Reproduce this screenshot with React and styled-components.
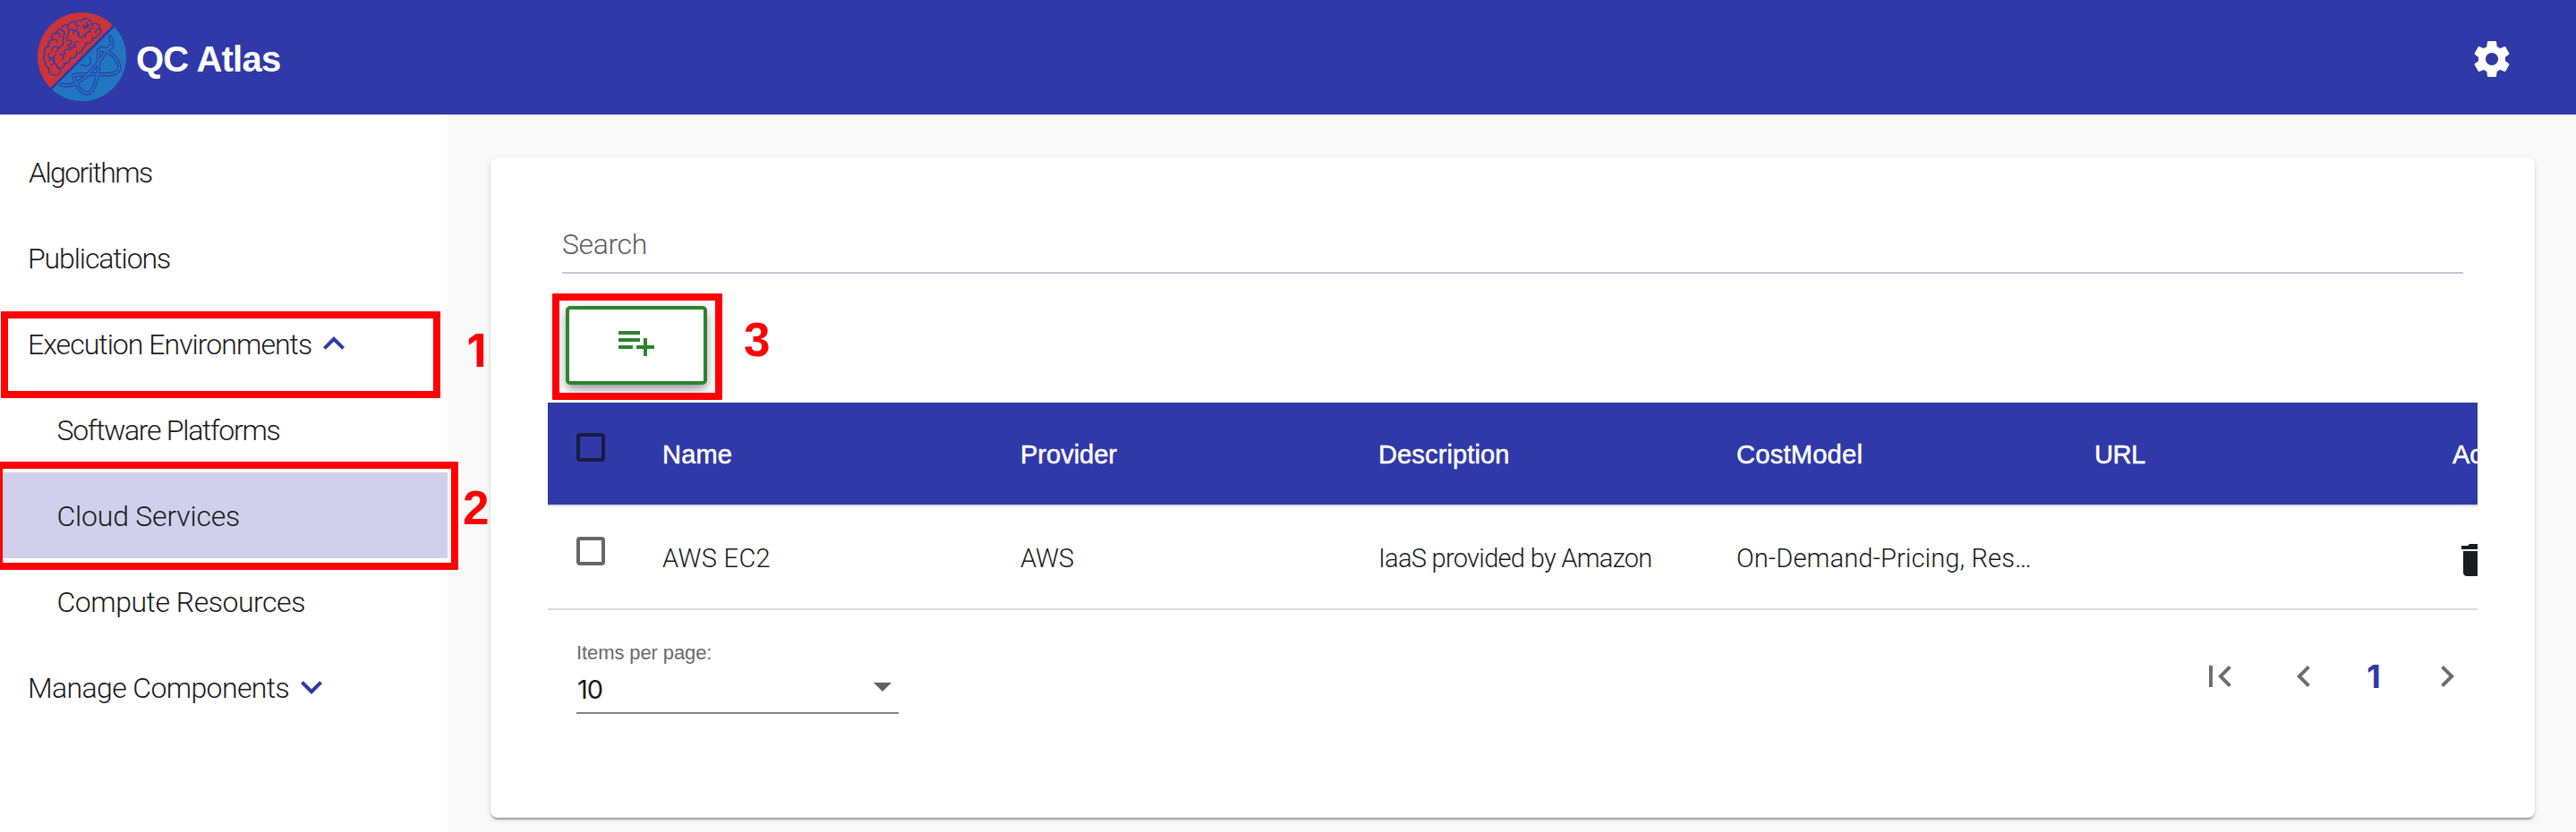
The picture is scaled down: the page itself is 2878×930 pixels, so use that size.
import React from 'react';
import styled, { createGlobalStyle } from 'styled-components';

const indigo = '#3039a8';
const light = 'Roboto, "Liberation Sans", sans-serif';
const sans = '"Liberation Sans", Arial, sans-serif';
const digits = 'Inter, "Liberation Sans", sans-serif';

const GlobalStyle = createGlobalStyle`
  *, *::before, *::after { box-sizing: border-box; }
  body { margin: 0; background: #f9f9f9; font-family: ${sans}; overflow: hidden; }
  button { font: inherit; padding: 0; border: 0; background: none; }
  svg { display: block; flex: none; }
`;

const Page = styled.div`
  position: relative;
  width: 2878px;
  height: 930px;
  display: flex;
  flex-direction: column;
  overflow: hidden;
`;

const Header = styled.header`
  height: 128px;
  flex: none;
  display: flex;
  align-items: center;
  padding: 0 70px 0 42px;
  background: ${indigo};
  color: #fff;
`;

const Brand = styled.div`
  flex: 1;
  display: flex;
  align-items: center;
  gap: 11px;
`;

const BrandName = styled.h1`
  margin: 4px 0 0;
  font: bold 40px/46px ${sans};
  letter-spacing: -0.75px;
`;

const Gear = styled.button`
  display: flex;
  margin-top: 4px;
  color: #fff;
`;

const Body = styled.div`
  flex: 1;
  display: flex;
  min-height: 0;
`;

const Sidebar = styled.nav`
  width: 500px;
  flex: none;
  padding-top: 16px;
  background: #fff;
`;

const NavItem = styled.a`
  height: 96px;
  display: flex;
  align-items: center;
  gap: 1px;
  padding-left: ${p => (p.$nested ? 63.5 : p.$flush ? 32 : 31)}px;
  background: ${p => (p.$active ? '#d0d0ec' : 'transparent')};
  color: ${indigo};
`;

const NavLabel = styled.span`
  padding-top: 2px;
  font: 300 32px/38px ${light};
  letter-spacing: ${p => p.$track}px;
  color: #1a1a1a;
  white-space: nowrap;
`;

const Main = styled.main`
  flex: 1;
  min-width: 0;
  padding: 48px 46px 16px 48px;
  background: #f9f9f9;
`;

const Card = styled.section`
  height: 738px;
  display: flex;
  flex-direction: column;
  padding: 74px 64px 0;
  border-radius: 8px;
  background: #fff;
  box-shadow: 0 4px 2px -2px rgba(0, 0, 0, 0.2), 0 2px 2px rgba(0, 0, 0, 0.14),
    0 2px 6px rgba(0, 0, 0, 0.12);
`;

const SearchField = styled.div`
  height: 56px;
  flex: none;
  margin: 0 16px;
  padding-top: 4px;
  border-bottom: 2px solid #c3c8d3;
  font: 300 32px/38px ${light};
  letter-spacing: -0.39px;
  color: #5e5e5e;
`;

const AddButton = styled.button`
  width: 158px;
  height: 88px;
  flex: none;
  margin: 36px 0 20px 20px;
  display: flex;
  justify-content: center;
  padding-top: 12px;
  border: 4px solid #2e832e;
  border-radius: 5px;
  background: #fff;
  color: #2e832e;
  box-shadow: 0 6px 10px -2px rgba(0, 0, 0, 0.3), 0 4px 16px rgba(0, 0, 0, 0.2);
`;

const Table = styled.div`
  flex: none;
  overflow: hidden;
`;

const TableRow = styled.div`
  height: 116px;
  width: 2528px;
  display: grid;
  grid-template-columns: 128px repeat(6, 400px);
  align-items: center;
  border-bottom: 2px solid #d9dbe0;
  background: ${p => (p.$head ? indigo : '#fff')};
`;

const Checkbox = styled.span`
  width: 32px;
  height: 32px;
  margin: 0 0 14px 32px;
  border: 4px solid ${p => (p.$dark ? '#181b42' : '#666')};
  border-radius: 4px;
`;

const HeadCell = styled.div`
  padding-top: 2px;
  font: 29px/34px ${sans};
  letter-spacing: ${p => p.$track || 0}px;
  -webkit-text-stroke: 0.5px #fff;
  color: #fff;
  white-space: nowrap;
`;

const Cell = styled.div`
  padding-top: ${p => (p.$icon ? 6 : 1)}px;
  font: 300 29px/34px ${light};
  letter-spacing: ${p => p.$track || 0}px;
  color: #191c20;
  white-space: nowrap;
`;

const Pager = styled.footer`
  display: flex;
  justify-content: space-between;
  padding: 32px 10px 0 32px;
`;

const PageSize = styled.div`
  width: 360px;
  height: 84px;
  border-bottom: 2px solid #858585;
`;

const PageSizeLabel = styled.div`
  padding-top: 3px;
  font: 22px/26px ${sans};
  letter-spacing: -0.1px;
  color: #6b6b6b;
`;

const PageSizeValue = styled.div`
  display: flex;
  align-items: center;
  justify-content: space-between;
  padding: 8px 8px 0 1px;
  font: 29px/34px ${digits};
  letter-spacing: -1px;
  color: #1a1a1a;
`;

const PageSizeNumber = styled.span`
  margin: 3px 0 -3px;
`;

const PageNav = styled.div`
  display: flex;
  align-items: center;
  height: 48px;
  margin-top: 18px;
  color: #6e6e6e;
`;

const PageButton = styled.button`
  display: flex;
  margin-right: ${p => p.$after || 0}px;
  color: inherit;
`;

const CurrentPage = styled.span`
  width: 112px;
  padding: 0 4px 1px 0;
  text-align: center;
  font: bold 36px/46px ${digits};
  color: ${indigo};
`;

const Outline = styled.div`
  position: absolute;
  left: ${p => p.$x}px;
  top: ${p => p.$y}px;
  width: ${p => p.$w}px;
  height: ${p => p.$h}px;
  border: 8px solid #ff0004;
  border-radius: 1px;
`;

const Step = styled.span`
  position: absolute;
  left: ${p => p.$x}px;
  top: ${p => p.$y}px;
  font: bold 53px/60px ${sans};
  font-family: ${p => (p.$plain ? digits : sans)};
  font-size: ${p => (p.$plain ? 51 : 53)}px;
  color: #ff0004;
`;

const Icon = ({ d, size = 48 }) => (
  <svg width={size} height={size} viewBox="0 0 24 24" fill="currentColor">
    <path d={d} />
  </svg>
);

const icons = {
  settings:
    'M19.43 12.98c.04-.32.07-.64.07-.98s-.03-.66-.07-.98l2.11-1.65c.19-.15.24-.42.12-.64l-2-3.46c-.12-.22-.39-.3-.61-.22l-2.49 1c-.52-.4-1.08-.73-1.69-.98l-.38-2.65C14.46 2.18 14.25 2 14 2h-4c-.25 0-.46.18-.49.42l-.38 2.65c-.61.25-1.17.59-1.69.98l-2.49-1c-.23-.09-.49 0-.61.22l-2 3.46c-.13.22-.07.49.12.64l2.11 1.65c-.04.32-.07.65-.07.98s.03.66.07.98l-2.11 1.65c-.19.15-.24.42-.12.64l2 3.46c.12.22.39.3.61.22l2.49-1c.52.4 1.08.73 1.69.98l.38 2.65c.03.24.24.42.49.42h4c.25 0 .46-.18.49-.42l.38-2.65c.61-.25 1.17-.59 1.69-.98l2.49 1c.23.09.49 0 .61-.22l2-3.46c.12-.22.07-.49-.12-.64l-2.11-1.65zM12 15.5c-1.93 0-3.5-1.57-3.5-3.5s1.57-3.5 3.5-3.5 3.5 1.57 3.5 3.5-1.57 3.5-3.5 3.5z',
  less: 'M12 8l-6 6 1.41 1.41L12 10.83l4.59 4.58L18 14z',
  more: 'M16.59 8.59L12 13.17 7.41 8.59 6 10l6 6 6-6z',
  add: 'M14 10H2v2h12v-2zm0-4H2v2h12V6zm4 8v-4h-2v4h-4v2h4v4h2v-4h4v-2h-4zM2 16h8v-2H2v2z',
  trash: 'M6 19c0 1.1.9 2 2 2h8c1.1 0 2-.9 2-2V7H6v12zM19 4h-3.5l-1-1h-5l-1 1H5v2h14V4z',
  first: 'M18.41 16.59L13.82 12l4.59-4.59L17 6l-6 6 6 6zM6 6h2v12H6z',
  prev: 'M15.41 7.41L14 6l-6 6 6 6 1.41-1.41L10.83 12z',
  next: 'M10 6L8.59 7.41 13.17 12l-4.58 4.59L10 18l6-6z',
};

const LogoMark = styled.svg`
  margin-top: -1px;
`;

const Logo = () => (
  <LogoMark width="99" height="99" viewBox="36 42 297 297" fill="none" strokeLinecap="round" strokeLinejoin="round">
    <clipPath id="globe">
      <circle cx="184.500" cy="190.500" r="148.500" />
    </clipPath>
    <g clipPath="url(#globe)">
      <path d="M30 30H341L79 295L30 345Z" fill="#cb3439" />
      <path d="M341 44V345H41L86 299Z" fill="#2077c0" />
    </g>
    <g stroke={indigo} strokeWidth="4">
      <path d="M88 250a13 13 0 0 1-12-20a16 16 0 0 1-13-21a17 17 0 0 1-1-27a16 16 0 0 1 12-26a14 14 0 0 1 12-22a13 13 0 0 1 12-22a14 14 0 0 1 17-14a17 17 0 0 1 25-13a16 16 0 0 1 24-11a14 14 0 0 1 19-3a15 15 0 0 1 27-2a14 14 0 0 1 8 15a14 14 0 0 1 25 8a14 14 0 0 1-5 25a14 14 0 0 1-18 9a15 15 0 0 1-22 17a14 14 0 0 1-11 18a14 14 0 0 1-21 14a15 15 0 0 1-21 18a15 15 0 0 1-20 18a14 14 0 0 1-20 16a13 13 0 0 1-17 23z" />
      <path d="M85 135c10-7 17-2 18 7M97 112c12-4 16 5 13 12M115 102c12 0 14 8 8 16M139 88c-6 12 4 16 13 10M152 97c4 12 14 8 16-2M164 73c-8 10 2 16 13 12M190 84c10 12 16-4 11-7M207 82c0 12-14 15-22 8M243 99c-9-2-15 3-12 11M222 94c-12-3-15 8-8 14M211 107c-14-2-18 10-14 17M193 118c-10 15-24 4-22-8M155 112c6-13 22-8 19 2M145 103c-14 12-2 24-15 26M125 118c-12 14 4 22-5 34M135 136c16-8 21 10 7 15M173 140c-18-2-20 13-7 17M160 151c-7 19-23 9-21-2M146 169c-14-9-29 2-17 14M118 153c-18 2-7 18-22 22M105 162c-13-12-25-1-19 11M75 178c-8 13 4 21 13 14M96 185c-14 9 4 16-6 27M110 182c17-1 15 13 7 19M74 205c4-11 14-7 17 2M81 219c12-12 22-4 21 9" />
    </g>
    <g stroke={indigo} strokeWidth="13">
      <path d="M279 124C296 154 279 176 250 160M240 167C247 245 226 315 202 313C179 311 164 284 156 252M245 166C288 170 322 218 305 239C288 261 200 241 157 253M280 154C252 191 203 270 151 284C138 288 127 287 116 284" />
    </g>
    <g stroke="#2077c0" strokeWidth="6">
      <path d="M279 124C296 154 279 176 250 160M240 167C247 245 226 315 202 313C179 311 164 284 156 252M245 166C288 170 322 218 305 239C288 261 200 241 157 253M280 154C252 191 203 270 151 284C138 288 127 287 116 284" />
    </g>
    <path d="M210 190C219 207 211 222 197 221C190 221 185 219 182 216" stroke={indigo} strokeWidth="4" />
  </LogoMark>
);

const nav = [
  { label: 'Algorithms', track: -1.57, flush: true },
  { label: 'Publications', track: -1.1 },
  { label: 'Execution Environments', track: -0.96, icon: 'less' },
  { label: 'Software Platforms', track: -1.29, nested: true },
  { label: 'Cloud Services', track: -0.21, nested: true, active: true },
  { label: 'Compute Resources', track: -0.47, nested: true },
  { label: 'Manage Components', track: -0.63, icon: 'more' },
];

const columns = [
  ['Name', 0.2],
  ['Provider', 0],
  ['Description', 0.14],
  ['CostModel', 0.28],
  ['URL', -0.49],
  ['Actions', 0],
];

const service = [
  ['AWS EC2', 0.3],
  ['AWS', -0.2],
  ['IaaS provided by Amazon', -0.7],
  ['On-Demand-Pricing, Res…', 0.14],
  ['', 0],
];

export default function App() {
  return (
    <Page>
      <GlobalStyle />
      <Header>
        <Brand>
          <Logo />
          <BrandName>QC Atlas</BrandName>
        </Brand>
        <Gear aria-label="Settings">
          <Icon d={icons.settings} />
        </Gear>
      </Header>
      <Body>
        <Sidebar>
          {nav.map(item => (
            <NavItem key={item.label} $nested={item.nested} $active={item.active} $flush={item.flush}>
              <NavLabel $track={item.track}>{item.label}</NavLabel>
              {item.icon && <Icon d={icons[item.icon]} />}
            </NavItem>
          ))}
        </Sidebar>
        <Main>
          <Card>
            <SearchField>Search</SearchField>
            <AddButton aria-label="Add">
              <Icon d={icons.add} />
            </AddButton>
            <Table>
              <TableRow $head>
                <Checkbox $dark />
                {columns.map(([name, track]) => (
                  <HeadCell key={name} $track={track}>{name}</HeadCell>
                ))}
              </TableRow>
              <TableRow>
                <Checkbox />
                {service.map(([text, track], i) => (
                  <Cell key={i} $track={track}>{text}</Cell>
                ))}
                <Cell $icon>
                  <Icon d={icons.trash} />
                </Cell>
              </TableRow>
            </Table>
            <Pager>
              <PageSize>
                <PageSizeLabel>Items per page:</PageSizeLabel>
                <PageSizeValue>
                  <PageSizeNumber>10</PageSizeNumber>
                  <svg width="20" height="10" viewBox="0 0 20 10" fill="#616161">
                    <path d="M0 0h20L10 10z" />
                  </svg>
                </PageSizeValue>
              </PageSize>
              <PageNav>
                <PageButton $after={46} aria-label="First page">
                  <Icon d={icons.first} />
                </PageButton>
                <PageButton aria-label="Previous page">
                  <Icon d={icons.prev} />
                </PageButton>
                <CurrentPage>1</CurrentPage>
                <PageButton aria-label="Next page">
                  <Icon d={icons.next} />
                </PageButton>
              </PageNav>
            </Pager>
          </Card>
        </Main>
      </Body>
      <Outline $x={1} $y={348} $w={491} $h={97} />
      <Outline $x={-5} $y={516} $w={517} $h={121} />
      <Outline $x={617} $y={328} $w={190} $h={119} />
      <Step $plain $x={521.5} $y={362}>1</Step>
      <Step $x={517} $y={538}>2</Step>
      <Step $x={831} $y={350}>3</Step>
    </Page>
  );
}
